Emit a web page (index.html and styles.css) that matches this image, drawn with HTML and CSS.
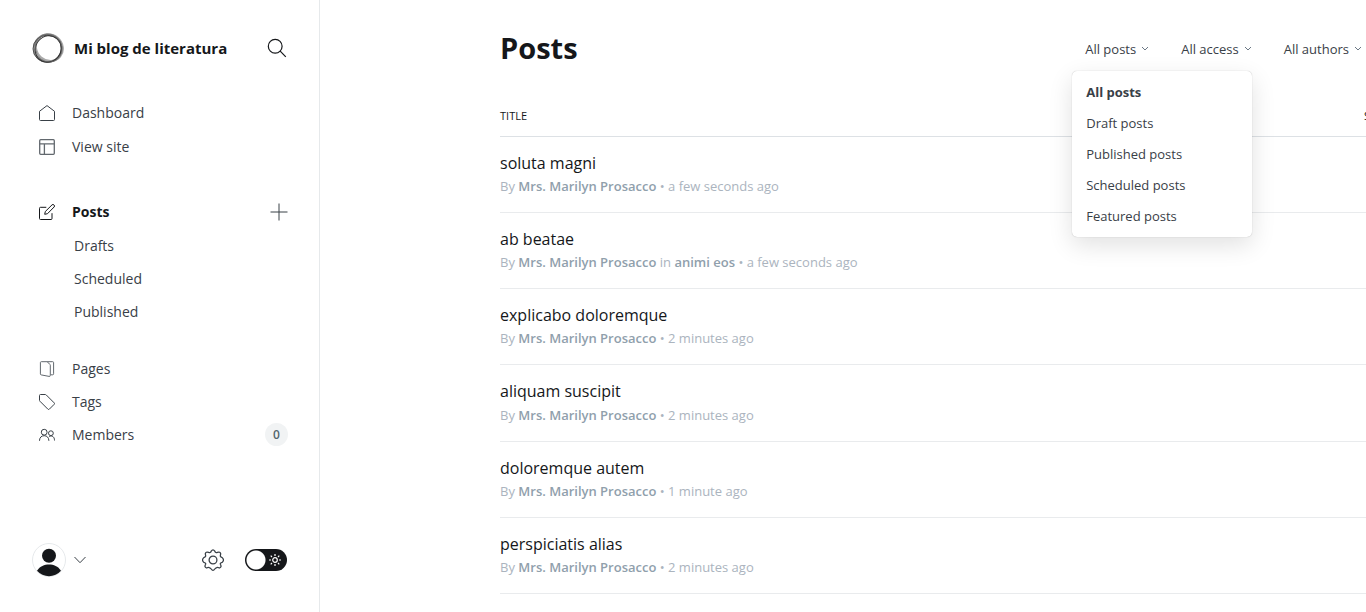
FILE: index.html
```html
<!DOCTYPE html>
<html lang="en">
<head>
<meta charset="utf-8">
<meta name="viewport" content="width=device-width, initial-scale=1">
<title>Posts - Mi blog de literatura</title>
<link rel="stylesheet" href="styles.css">
</head>
<body>
<div class="app">
  <aside class="sidebar">
    <header class="site">
      <svg class="site-logo" viewBox="0 0 32 32" aria-hidden="true">
        <ellipse cx="16.800" cy="14.800" rx="14" ry="12.800" stroke="#aaa" stroke-width="2" transform="rotate(40 16 16)"/>
        <circle cx="15.800" cy="16.200" r="13.800" stroke="#888" stroke-width="1.800"/>
        <ellipse cx="15.200" cy="16.800" rx="14.200" ry="13.600" stroke="#444" stroke-width=".9"/>
        <ellipse cx="15.500" cy="16.800" rx="13.600" ry="12.600" stroke="#333" stroke-width="1" transform="rotate(-50 16 16)"/>
        <ellipse cx="16.500" cy="15.500" rx="14.200" ry="13.200" stroke="#666" stroke-width=".7" transform="rotate(60 16 16)"/>
      </svg>
      <span class="site-name">Mi blog de literatura</span>
      <button class="icon-button" type="button" aria-label="Search">
        <svg class="icon-search" viewBox="0 0 20 20" aria-hidden="true"><circle cx="8.2" cy="8.2" r="6.9"/><path d="M13.2 13.2l5.6 5.6"/></svg>
      </button>
    </header>
    <nav class="nav">
      <ul class="nav-group">
        <li><a class="nav-link" href="#dashboard"><svg class="nav-icon" viewBox="0 0 16 16" aria-hidden="true"><path d="M.5 6.3L8 .6l7.500 5.700v8.200a1 1 0 0 1-1 1h-13a1 1 0 0 1-1-1z"/></svg>Dashboard</a></li>
        <li><a class="nav-link" href="#site"><svg class="nav-icon nav-icon-soft" viewBox="0 0 16 16" aria-hidden="true"><rect x=".7" y=".7" width="14.600" height="14.600" rx="1" stroke-width="1.300"/><path stroke-width="1.300" d="M.7 4.800h14.600M5.400 4.800v10.500"/></svg>View site</a></li>
      </ul>
      <ul class="nav-group nav-posts">
        <li class="nav-row">
          <a class="nav-link nav-current" href="#posts"><svg class="nav-icon" viewBox="0 0 16 16" aria-hidden="true"><path d="M7.300 3.300H1.500a1 1 0 0 0-1 1v10.200a1 1 0 0 0 1 1h10.500a1 1 0 0 0 1-1V9.200"/><path d="M5.700 10.300l.6-2.800L13 .9a1.300 1.300 0 0 1 1.900 0l.2.2a1.300 1.300 0 0 1 0 1.900L8.500 9.700z"/></svg>Posts</a>
          <button class="icon-button" type="button" aria-label="New post"><svg class="icon-plus" viewBox="0 0 18 18" aria-hidden="true"><path d="M9 .5v17M.5 9h17"/></svg></button>
        </li>
        <li><a class="nav-sublink" href="#drafts">Drafts</a></li>
        <li><a class="nav-sublink" href="#scheduled">Scheduled</a></li>
        <li><a class="nav-sublink" href="#published">Published</a></li>
      </ul>
      <ul class="nav-group nav-manage">
        <li><a class="nav-link" href="#pages"><svg class="nav-icon nav-icon-soft" viewBox="0 0 16 16" aria-hidden="true"><path d="M2.300.7h11.400a.9.900 0 0 1 .9.900v11.200a1 1 0 0 1-1 1h-1.800M2.300.7a.9.900 0 0 0-.9.900v11.300a1 1 0 0 0 .8 1l7.900 1.500a1 1 0 0 0 1.200-1V4.200a1 1 0 0 0-.7-1L8.500 1"/></svg>Pages</a></li>
        <li><a class="nav-link" href="#tags"><svg class="nav-icon" viewBox="0 0 16 16" aria-hidden="true"><path d="M.5 1.500a1 1 0 0 1 1-1h4.700a1.500 1.500 0 0 1 1 .4l8 8a1 1 0 0 1 0 1.400l-4.900 4.900a1 1 0 0 1-1.400 0l-8-8a1.500 1.500 0 0 1-.4-1z"/></svg>Tags</a></li>
        <li class="nav-row"><a class="nav-link" href="#members"><svg class="nav-icon" viewBox="0 0 16 16" aria-hidden="true"><circle cx="5.200" cy="5.200" r="2.900"/><path d="M.5 13.800c0-3.300 1.900-5.100 4.700-5.100s4.600 1.800 4.700 5.100"/><circle cx="11.900" cy="6.200" r="2.400"/><path d="M10.200 9.500c2.900-1.400 5.300.2 5.300 4"/></svg>Members</a><span class="count">0</span></li>
      </ul>
    </nav>
    <footer class="sidebar-footer">
      <button class="user" type="button" aria-label="Account menu">
        <svg class="avatar" viewBox="0 0 34 34" aria-hidden="true"><circle class="avatar-ring" cx="17" cy="17" r="16.500"/><circle cx="17" cy="12.800" r="7"/><path d="M5 27.800c3-4.500 7.300-6.200 12-6.200s9 1.700 12 6.200a16 16 0 0 1-24 0z"/></svg>
        <svg class="user-arrow" viewBox="0 0 12 8" aria-hidden="true"><path d="M.5 1L6 6.700 11.500 1"/></svg>
      </button>
      <button class="icon-button settings" type="button" aria-label="Settings">
        <svg class="icon-gear" viewBox="0 0 22 22" aria-hidden="true"><circle cx="11" cy="11" r="3.900"/><path d="M9.200 2.200Q11 -.3 12.800 2.200Q13.500 4.200 15.400 3.300Q18.300 2.400 18.700 4.900Q18.200 6.800 18.400 7.300Q18.700 8.200 20.200 8.600Q22.700 11 20.200 13.400Q17.900 14 18.400 15.200Q20 18.100 17.500 19Q15.600 18.200 14.700 18.600Q13.500 19 12.800 20Q11 22.600 9.200 20Q8.500 19 7.300 18.600Q6.400 18.200 4.500 19Q2 18.100 3.600 15.200Q4.100 14 1.800 13.400Q-.7 11 1.800 8.600Q3.300 8.200 3.600 7.300Q3.800 6.800 3.300 4.900Q3.700 2.400 6.600 3.300Q8.500 4.200 9.200 2.200Z"/></svg>
      </button>
      <label class="theme">
        <input class="theme-input" type="checkbox" aria-label="Dark mode">
        <svg class="theme-sun" viewBox="0 0 12 12" aria-hidden="true"><circle cx="6" cy="6" r="2.300"/><path d="M6 0v2M6 10v2M0 6h2M10 6h2M1.700 1.700l1.300 1.300M9 9l1.300 1.300M10.300 1.700L9 3M3 9l-1.300 1.300"/></svg>
      </label>
    </footer>
  </aside>
  <main class="main">
    <header class="page-header">
      <h1 class="page-title">Posts</h1>
      <div class="filters">
        <div class="filter">
          <button class="filter-button" type="button" aria-expanded="true" aria-haspopup="listbox">All posts<svg class="filter-arrow" viewBox="0 0 8 6" aria-hidden="true"><path d="M1 1l3 3 3-3"/></svg></button>
          <ul class="menu" role="listbox" aria-label="Post type">
            <li class="menu-item menu-selected" role="option" aria-selected="true">All posts</li>
            <li class="menu-item" role="option">Draft posts</li>
            <li class="menu-item" role="option">Published posts</li>
            <li class="menu-item" role="option">Scheduled posts</li>
            <li class="menu-item" role="option">Featured posts</li>
          </ul>
        </div>
        <button class="filter-button" type="button">All access<svg class="filter-arrow" viewBox="0 0 8 6" aria-hidden="true"><path d="M1 1l3 3 3-3"/></svg></button>
        <button class="filter-button" type="button">All authors<svg class="filter-arrow" viewBox="0 0 8 6" aria-hidden="true"><path d="M1 1l3 3 3-3"/></svg></button>
      </div>
    </header>
    <table class="posts">
      <thead><tr><th class="col-title" scope="col">Title</th><th scope="col">Status</th></tr></thead>
      <tbody>
        <tr><td><a class="post-title" href="#1">soluta magni</a><p class="post-meta">By <b>Mrs. Marilyn Prosacco</b> • a few seconds ago</p></td><td></td></tr>
        <tr><td><a class="post-title" href="#2">ab beatae</a><p class="post-meta">By <b>Mrs. Marilyn Prosacco</b> in <b>animi eos</b> • a few seconds ago</p></td><td></td></tr>
        <tr><td><a class="post-title" href="#3">explicabo doloremque</a><p class="post-meta">By <b>Mrs. Marilyn Prosacco</b> • 2 minutes ago</p></td><td></td></tr>
        <tr><td><a class="post-title" href="#4">aliquam suscipit</a><p class="post-meta">By <b>Mrs. Marilyn Prosacco</b> • 2 minutes ago</p></td><td></td></tr>
        <tr><td><a class="post-title" href="#5">doloremque autem</a><p class="post-meta">By <b>Mrs. Marilyn Prosacco</b> • 1 minute ago</p></td><td></td></tr>
        <tr><td><a class="post-title" href="#6">perspiciatis alias</a><p class="post-meta">By <b>Mrs. Marilyn Prosacco</b> • 2 minutes ago</p></td><td></td></tr>
      </tbody>
    </table>
  </main>
</div>
</body>
</html>
```
FILE: styles.css
```css
* { box-sizing: border-box; }
body { margin: 0; background: #fff; color: #15171a; font: 14px/20px "Open Sans", "Noto Sans", sans-serif; }
ul, p, h1 { margin: 0; padding: 0; list-style: none; }
a { color: inherit; text-decoration: none; }
button { margin: 0; padding: 0; border: 0; background: none; color: inherit; font: inherit; cursor: pointer; }
svg { display: block; flex: none; fill: none; stroke: currentColor; }

.app { display: grid; grid-template-columns: 320px minmax(0, 1fr); height: 100vh; overflow: hidden; }

.sidebar { display: flex; flex-direction: column; border-right: 1px solid #e6e9eb; color: #394047; }
.site { display: flex; align-items: center; height: 96px; padding: 0 32px; color: #15171a; }
.site-logo { width: 32px; height: 32px; margin-right: 10px; }
.site-name { flex: 1; font-size: 15px; font-weight: 700; white-space: nowrap; }
.icon-search { width: 20px; height: 20px; stroke-width: 1.2; }
.nav { flex: 1; }
.nav-posts { margin-top: 31px; }
.nav-manage { margin-top: 24px; }
.nav-row { display: flex; align-items: center; justify-content: space-between; padding-right: 31px; }
.nav-link { display: flex; align-items: center; gap: 17px; height: 34px; padding-left: 39px; }
.nav-manage .nav-link { height: 33px; }
.nav-sublink { display: flex; align-items: center; height: 33px; padding-left: 74px; }
.nav-icon { width: 16px; height: 16px; }
.nav-icon-soft { color: #62686e; }
.nav-current { color: #15171a; font-weight: 700; }
.icon-plus { width: 18px; height: 18px; }
.count { min-width: 23px; height: 23px; border-radius: 12px; background: #f1f3f4; font-size: 12px; font-weight: 600; line-height: 23px; text-align: center; color: #54666d; }

.sidebar-footer { display: flex; align-items: center; padding: 0 32px 35px; }
.user { display: flex; align-items: center; gap: 8px; margin-right: auto; }
.avatar { width: 34px; height: 34px; fill: #15171a; stroke: none; }
.avatar-ring { fill: #fff; stroke: #e6e9eb; }
.user-arrow { width: 12px; height: 8px; }
.settings { margin-right: 21px; }
.icon-gear { width: 22px; height: 22px; stroke-width: 1.3; }
.theme { display: grid; align-items: center; }
.theme-input { grid-area: 1 / 1; appearance: none; width: 42px; height: 22px; margin: 0; border-radius: 11px; background: radial-gradient(circle at 11px 11px, #fff 9px, #15171a 10px); }
.theme-sun { grid-area: 1 / 1; justify-self: end; width: 12px; height: 12px; margin-right: 6px; color: #fff; stroke-width: 1.2; }

.main { padding: 0 0 0 180px; overflow: hidden; }
.page-header { display: flex; align-items: center; justify-content: space-between; width: 862px; height: 95px; }
.page-title { font-size: 29px; line-height: 40px; font-weight: 700; }
.filters { display: flex; align-items: center; gap: 32px; padding-top: 2px; }
.filter { position: relative; }
.filter-button { display: flex; align-items: center; gap: 5px; font-size: 13px; color: #394047; white-space: nowrap; }
.filter-arrow { width: 8px; height: 6px; color: #6b7885; }
.menu { position: absolute; top: 32px; left: -13px; z-index: 1; width: 180px; padding: 6px 0 5px; border-radius: 5px; background: #fff; box-shadow: 0 0 1px rgba(0, 0, 0, .3), 0 8px 24px rgba(0, 0, 0, .12); color: #394047; }
.menu-item { padding: 0 14px; font-size: 13px; line-height: 31px; }
.menu-selected { font-weight: 700; }

.posts { width: 1000px; border-collapse: collapse; table-layout: fixed; }
.posts th { height: 41px; padding: 1px 0 0; border-bottom: 1px solid #dde1e5; font-size: 11px; font-weight: 400; text-align: left; text-transform: uppercase; }
.posts td { padding: 15px 0; border-bottom: 1px solid #e9ebed; }
.col-title { width: 864px; }
.post-title { display: block; font-size: 16px; line-height: 1.45; font-weight: 500; }
.post-meta { font-size: 13px; line-height: 1.7; color: #abb4be; }
.post-meta b { color: #90a0ac; font-weight: 600; }
```
